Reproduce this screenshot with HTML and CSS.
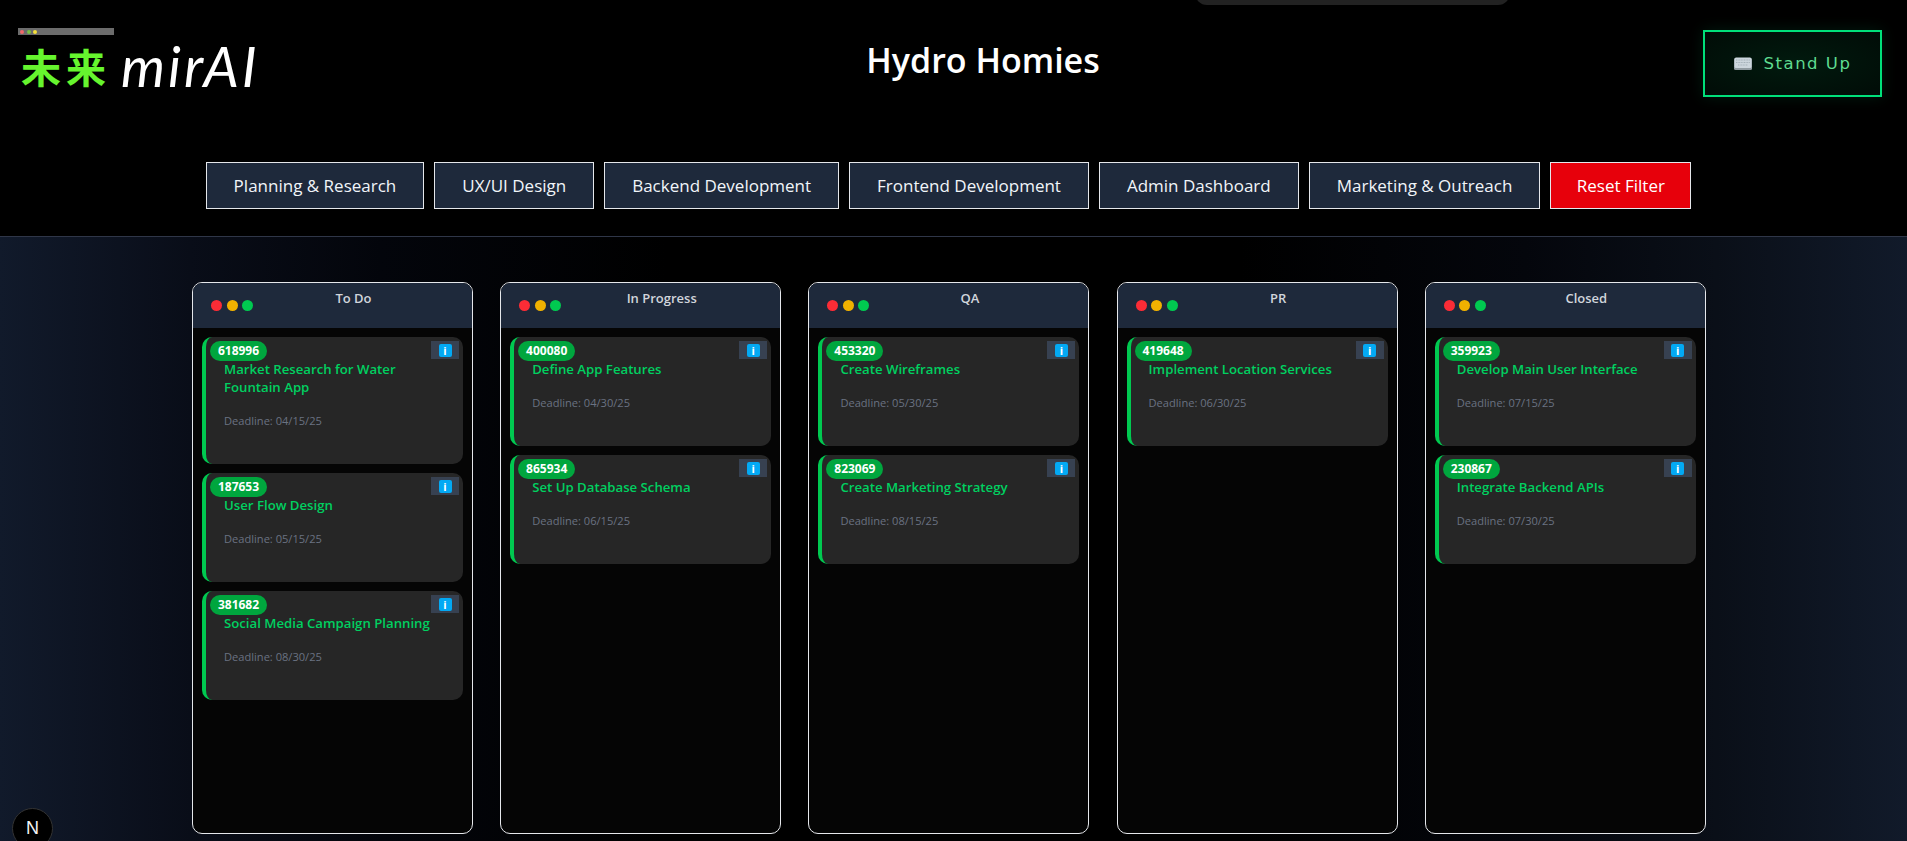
FILE: index.html
```html
<!DOCTYPE html>
<html lang="en">
<head>
<meta charset="utf-8">
<title>Hydro Homies</title>
<link rel="stylesheet" href="styles.css">
</head>
<body>
<div class="notch"></div>
<header class="top">
  <div class="top-row">
    <div class="logo">
      <div class="logo-bar"><i class="lb lb-r"></i><i class="lb lb-g"></i><i class="lb lb-y"></i></div>
      <div class="logo-main"><span class="logo-cjk">未来</span><span class="logo-name">mirAI</span></div>
    </div>
    <h1 class="title">Hydro Homies</h1>
    <button class="standup">
      <svg class="kbd" viewBox="0 0 18 13" width="18" height="13"><rect x="0" y="1" width="18" height="12" rx="1.5" fill="#8f9aa0"/><rect x="0.5" y="0.5" width="17" height="10.5" rx="1.5" fill="#ccd6dd"/><path d="M2 3h14M2 5.5h14M4 8h10" stroke="#a3b0b8" stroke-width="1" stroke-dasharray="1 .6"/></svg>
      <span>Stand Up</span>
    </button>
  </div>
  <nav class="filters">
    <button class="filter">Planning &amp; Research</button>
    <button class="filter">UX/UI Design</button>
    <button class="filter">Backend Development</button>
    <button class="filter">Frontend Development</button>
    <button class="filter">Admin Dashboard</button>
    <button class="filter">Marketing &amp; Outreach</button>
    <button class="filter reset">Reset Filter</button>
  </nav>
</header>
<main class="board">
  <section class="col">
    <div class="col-head"><div class="dots"><i class="dot r"></i><i class="dot a"></i><i class="dot g"></i></div><h2 class="col-title">To Do</h2></div>
    <div class="col-body">
      <article class="card"><span class="badge">618996</span><span class="info"><b>i</b></span><h3 class="card-title">Market Research for Water Fountain App</h3><p class="deadline">Deadline: 04/15/25</p></article>
      <article class="card"><span class="badge">187653</span><span class="info"><b>i</b></span><h3 class="card-title">User Flow Design</h3><p class="deadline">Deadline: 05/15/25</p></article>
      <article class="card"><span class="badge">381682</span><span class="info"><b>i</b></span><h3 class="card-title">Social Media Campaign Planning</h3><p class="deadline">Deadline: 08/30/25</p></article>
    </div>
  </section>
  <section class="col">
    <div class="col-head"><div class="dots"><i class="dot r"></i><i class="dot a"></i><i class="dot g"></i></div><h2 class="col-title">In Progress</h2></div>
    <div class="col-body">
      <article class="card"><span class="badge">400080</span><span class="info"><b>i</b></span><h3 class="card-title">Define App Features</h3><p class="deadline">Deadline: 04/30/25</p></article>
      <article class="card"><span class="badge">865934</span><span class="info"><b>i</b></span><h3 class="card-title">Set Up Database Schema</h3><p class="deadline">Deadline: 06/15/25</p></article>
    </div>
  </section>
  <section class="col">
    <div class="col-head"><div class="dots"><i class="dot r"></i><i class="dot a"></i><i class="dot g"></i></div><h2 class="col-title">QA</h2></div>
    <div class="col-body">
      <article class="card"><span class="badge">453320</span><span class="info"><b>i</b></span><h3 class="card-title">Create Wireframes</h3><p class="deadline">Deadline: 05/30/25</p></article>
      <article class="card"><span class="badge">823069</span><span class="info"><b>i</b></span><h3 class="card-title">Create Marketing Strategy</h3><p class="deadline">Deadline: 08/15/25</p></article>
    </div>
  </section>
  <section class="col">
    <div class="col-head"><div class="dots"><i class="dot r"></i><i class="dot a"></i><i class="dot g"></i></div><h2 class="col-title">PR</h2></div>
    <div class="col-body">
      <article class="card"><span class="badge">419648</span><span class="info"><b>i</b></span><h3 class="card-title">Implement Location Services</h3><p class="deadline">Deadline: 06/30/25</p></article>
    </div>
  </section>
  <section class="col">
    <div class="col-head"><div class="dots"><i class="dot r"></i><i class="dot a"></i><i class="dot g"></i></div><h2 class="col-title">Closed</h2></div>
    <div class="col-body">
      <article class="card"><span class="badge">359923</span><span class="info"><b>i</b></span><h3 class="card-title">Develop Main User Interface</h3><p class="deadline">Deadline: 07/15/25</p></article>
      <article class="card"><span class="badge">230867</span><span class="info"><b>i</b></span><h3 class="card-title">Integrate Backend APIs</h3><p class="deadline">Deadline: 07/30/25</p></article>
    </div>
  </section>
</main>
<div class="next-badge">N</div>
</body>
</html>
```
FILE: styles.css
```css
* { box-sizing: border-box; }
html, body { margin: 0; height: 841px; overflow: hidden; }
body { background: #000; font-family: "Open Sans", "Noto Sans", sans-serif; color: #fff; }
.notch { position: absolute; top: -20px; left: 1195px; width: 315px; height: 25px; background: #222; border-radius: 12px; }
.top { height: 237px; background: #000; border-bottom: 1px solid #2f3648; padding: 28px 25px 0 18px; }
.top-row { display: flex; justify-content: space-between; align-items: flex-start; height: 134px; }
.logo { width: 245px; }
.logo-bar { width: 96px; height: 7px; background: #6c6c6c; display: flex; align-items: center; gap: 2.5px; padding-left: 2px; }
.lb { width: 4px; height: 4px; border-radius: 50%; }
.lb-r { background: #f06a6a; } .lb-g { background: #7ac143; } .lb-y { background: #f5e03a; }
.logo-main { display: flex; align-items: center; margin-top: 4px; height: 54px; }
.logo-cjk { font-family: "Noto Sans CJK SC", sans-serif; font-size: 40px; font-weight: 700; color: #66f52e; letter-spacing: 5px; margin-left: 3px; line-height: 54px; }
.logo-name { font-family: Lato, sans-serif; font-style: italic; font-weight: 400; font-size: 56px; letter-spacing: 3px; line-height: 54px; margin-left: 10px; }
.title { margin: 10px 0 0; font-size: 34px; font-weight: 600; line-height: 44px; }
.standup { width: 179px; height: 67px; margin-top: 2px; display: flex; align-items: center; justify-content: center; gap: 12px; background: radial-gradient(ellipse at center, #011a0e 0%, #010c07 100%); border: 2px solid #00e07a; box-shadow: 0 0 14px rgba(0, 224, 122, .12); color: #5fdc90; font-family: "DejaVu Sans", sans-serif; font-size: 16.5px; letter-spacing: 1.5px; }
.filters { display: flex; justify-content: center; gap: 10px; padding-right: 3px; }
.filter { height: 47px; padding: 0 27px; background: #1e293b; border: 1px solid #e5e7eb; color: #f1f5f9; font-family: inherit; font-size: 17px; }
.filter.reset { padding: 0 25.5px; background: #e7000b; color: #fff; }
.board { height: 604px; display: grid; grid-template-columns: repeat(5, 281px); column-gap: 27.2px; justify-content: start; padding: 45px 0 0 192px; background: linear-gradient(90deg, #111a2b 0%, #090d18 10%, #03050b 20%, #000 35%, #000 65%, #04060c 80%, #0a0f18 90%, #111a2a 100%); }
.col { height: 552px; background: #050505; border: 1px solid #e5e7eb; border-radius: 10px; overflow: hidden; }
.col-head { display: flex; align-items: flex-start; height: 45px; padding: 5px 18px 0; background: #1e293b; }
.dots { display: flex; gap: 4.5px; margin-top: 12px; }
.dot { width: 11px; height: 11px; border-radius: 50%; }
.r { background: #fb2c36; } .a { background: #f0b100; } .g { background: #00c950; }
.col-title { flex: 1; margin: 0; text-align: center; font-size: 13px; font-weight: 600; line-height: 20px; color: #d1d5db; }
.col-body { display: flex; flex-direction: column; gap: 9px; padding: 9px 9px 0; }
.card { position: relative; min-height: 109px; padding: 23px 20px 35px 18px; background: #262626; border-left: 4px solid #00c950; border-radius: 10px; }
.badge { position: absolute; left: 4px; top: 4px; width: 57px; height: 20px; border-radius: 10px; background: #00a63e; color: #fff; font-size: 12px; font-weight: 700; line-height: 20px; text-align: center; }
.info { position: absolute; right: 4px; top: 4px; width: 28px; height: 18px; background: #374151; display: flex; justify-content: center; align-items: center; }
.info b { width: 13px; height: 13px; background: #03a9f4; border-radius: 2px; color: #fff; font-size: 11px; line-height: 13px; text-align: center; }
.card-title { margin: 0; font-size: 13.2px; font-weight: 600; line-height: 18px; color: #00d060; }
.deadline { margin: 17px 0 0; font-size: 11.1px; line-height: 16px; color: #6a7282; }
.next-badge { position: fixed; left: 12px; top: 808px; width: 41px; height: 41px; border-radius: 50%; background: #000; border: 1px solid #333; color: #f4f4f4; font-family: "Liberation Sans", sans-serif; font-size: 18px; text-align: center; line-height: 38px; }
```
